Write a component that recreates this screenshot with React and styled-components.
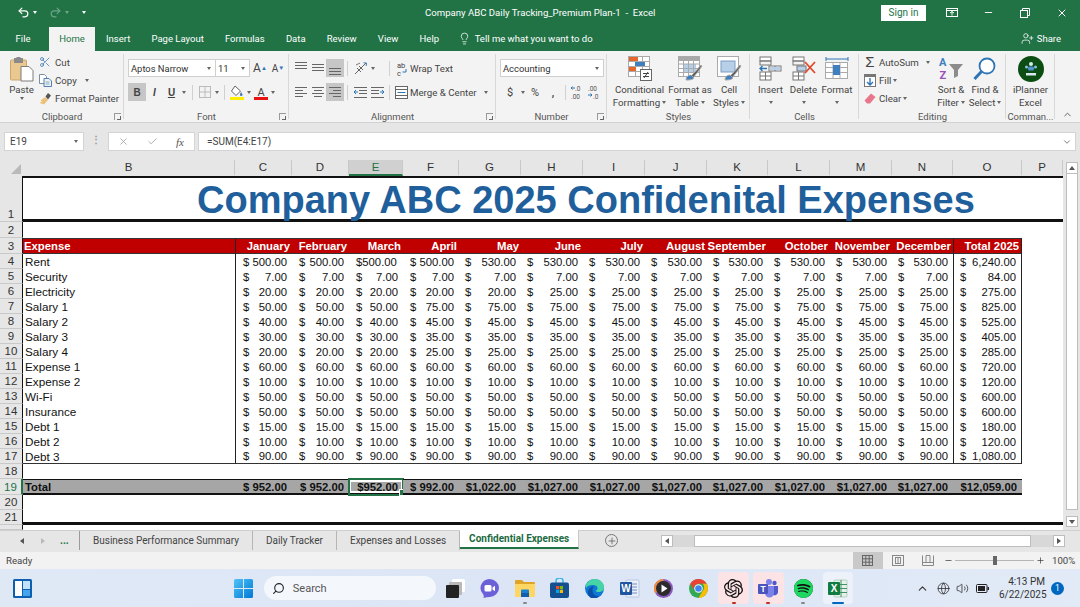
import React from "react";
import styled, { createGlobalStyle } from "styled-components";
import { Undo2, Redo2, Lightbulb, UserPlus, Scissors, Search, ChevronUp, ChevronDown, Globe, Volume2, X, Check, Minus, Plus } from "lucide-react";
import { SiOpenai, SiSpotify } from "react-icons/si";

const UI_FONT = `Roboto, "Noto Sans", sans-serif`;
const CELL_FONT = `"Liberation Sans", Arial, sans-serif`;
const GREEN = "#217346";

const GlobalStyle = createGlobalStyle`
  html, body { margin: 0; padding: 0; width: 1080px; height: 607px; overflow: hidden; }
  body { font-family: ${UI_FONT}; background: #e6e6e6; }
  * { box-sizing: border-box; }
`;

// column widths B..P
const COLUMNS = [
  ["B", 212], ["C", 57], ["D", 57], ["E", 54], ["F", 56], ["G", 62], ["H", 62], ["I", 62],
  ["J", 62], ["K", 61], ["L", 62], ["M", 62], ["N", 61], ["O", 69], ["P", 41],
];
const TEMPLATE = `23px ${COLUMNS.map((c) => c[1] + "px").join(" ")} 3px`;

const MONTHS = ["January", "February", "March", "April", "May", "June", "July", "August", "September", "October", "November", "December"];

const rep = (a, b, c) => [...Array(a).fill(b), ...Array(12 - a).fill(c)];
const EXPENSES = [
  ["Rent", rep(4, 500, 530), "6,240.00"],
  ["Security", rep(12, 7), "84.00"],
  ["Electricity", rep(5, 20, 25), "275.00"],
  ["Salary 1", rep(3, 50, 75), "825.00"],
  ["Salary 2", rep(3, 40, 45), "525.00"],
  ["Salary 3", rep(3, 30, 35), "405.00"],
  ["Salary 4", rep(3, 20, 25), "285.00"],
  ["Expense 1", rep(12, 60), "720.00"],
  ["Expense 2", rep(12, 10), "120.00"],
  ["Wi-Fi", rep(12, 50), "600.00"],
  ["Insurance", rep(12, 50), "600.00"],
  ["Debt 1", rep(12, 15), "180.00"],
  ["Debt 2", rep(12, 10), "120.00"],
  ["Debt 3", rep(12, 90), "1,080.00"],
];
const TOTALS = ["$ 952.00", "$ 952.00", "$952.00", "$ 992.00", "$1,022.00", "$1,027.00", "$1,027.00", "$1,027.00", "$1,027.00", "$1,027.00", "$1,027.00", "$1,027.00"];

/* ---------- shell ---------- */
const Page = styled.div`
  width: 1080px;
  height: 607px;
  display: flex;
  flex-direction: column;
  overflow: hidden;
`;

const TitleBar = styled.div`
  height: 25px;
  background: ${GREEN};
  color: #fff;
  display: flex;
  align-items: center;
  font-size: 9.6px;
`;
const QuickAccess = styled.div`
  width: 425px;
  padding-left: 17px;
  display: flex;
  align-items: center;
  gap: 3px;
`;
const DocTitle = styled.div`
  width: 456px;
  white-space: pre;
`;
const SignIn = styled.div`
  width: 45px;
  height: 16px;
  background: #fff;
  color: ${GREEN};
  font-size: 10px;
  display: flex;
  align-items: center;
  justify-content: center;
`;
const WinBtn = styled.div`
  width: 36.5px;
  display: flex;
  justify-content: center;
`;

const TabBar = styled.div`
  height: 26px;
  background: ${GREEN};
  display: flex;
  align-items: flex-end;
  padding-left: 5px;
  font-size: 9.5px;
  color: #fff;
`;
const RibbonTab = styled.div`
  height: 24px;
  padding: 0 10.6px 2px;
  margin-right: ${(p) => (p.$first ? "7.5px" : "0")};
  display: flex;
  align-items: center;
  background: ${(p) => (p.$active ? "#f3f3f3" : "transparent")};
  color: ${(p) => (p.$active ? GREEN : "#fff")};
`;
const TellMe = styled.div`
  height: 24px;
  padding-bottom: 2px;
  margin-left: 8px;
  display: flex;
  align-items: center;
  gap: 4px;
`;
const Share = styled.div`
  height: 24px;
  padding-bottom: 2px;
  margin-left: auto;
  margin-right: 19px;
  display: flex;
  align-items: center;
  gap: 3px;
`;

/* ---------- ribbon ---------- */
const Ribbon = styled.div`
  height: 72px;
  background: #f3f3f3;
  border-bottom: 1px solid #d2d2d2;
  display: flex;
  font-size: 9.7px;
  color: #444;
`;
const Group = styled.div`
  width: ${(p) => p.$w}px;
  flex: none;
  display: flex;
  flex-direction: column;
  position: relative;
  &::after {
    content: "";
    position: absolute;
    right: 0;
    top: 3px;
    bottom: 3px;
    width: 1px;
    background: #d8d8d8;
  }
`;
const GroupBody = styled.div`
  height: 59px;
  display: flex;
  padding-left: ${(p) => p.$pl || 0}px;
  flex-direction: ${(p) => (p.$rows ? "column" : "row")};
  gap: ${(p) => (p.$rows ? "6px" : "0")};
  padding-top: ${(p) => (p.$rows ? "8px" : "0")};
`;
const GroupLabel = styled.div`
  height: 12px;
  text-align: center;
  line-height: 14px;
  white-space: nowrap;
  color: #555;
  font-size: 9.5px;
  position: relative;
`;
const Launcher = styled.span`
  position: absolute;
  right: 3px;
  top: 3px;
  width: 7px;
  height: 7px;
  border: 1px solid #999;
  border-width: 1px 0 0 1px;
  &::after {
    content: "";
    position: absolute;
    right: 0;
    bottom: 0;
    width: 3px;
    height: 3px;
    border: solid #666;
    border-width: 0 1px 1px 0;
  }
`;
const Caret = styled.span`
  display: inline-block;
  width: 0;
  height: 0;
  flex: none;
  border-left: 2.5px solid transparent;
  border-right: 2.5px solid transparent;
  border-top: 3px solid ${(p) => p.$color || "#666"};
  margin-left: ${(p) => p.$ml || 0}px;
`;
const Spacer = styled.span`
  width: ${(p) => p.$w}px;
  flex: none;
`;
const PasteBtn = styled.div`
  width: 27px;
  flex: none;
  display: flex;
  flex-direction: column;
  align-items: center;
  padding-top: 6px;
  line-height: 13px;
  gap: 1px;
`;
const Stack = styled.div`
  display: flex;
  flex-direction: column;
  padding-top: 2px;
  padding-left: ${(p) => p.$pl || 0}px;
  width: ${(p) => (p.$w ? p.$w + "px" : "auto")};
  flex: none;
`;
const SmallRow = styled.div`
  height: 18px;
  display: flex;
  align-items: center;
  white-space: nowrap;
`;
const SmallIcon = styled.span`
  width: ${(p) => p.$w || 14}px;
  display: flex;
  justify-content: center;
  margin-right: ${(p) => p.$mr ?? 3}px;
  flex: none;
`;
const ToolRow = styled.div`
  height: 18px;
  display: flex;
  align-items: center;
`;
const Select = styled.div`
  width: ${(p) => p.$w}px;
  height: 18px;
  background: #fff;
  border: 1px solid #cfcfcf;
  margin-left: -1px;
  display: flex;
  align-items: center;
  justify-content: space-between;
  padding: 0 4px 0 2px;
  color: #333;
  font-size: 9.4px;
  white-space: nowrap;
  &:first-child { margin-left: 0; }
`;
const Tool = styled.div`
  width: ${(p) => p.$w}px;
  height: 18px;
  flex: none;
  display: flex;
  align-items: center;
  justify-content: center;
  background: ${(p) => (p.$on ? "#c6c6c6" : "transparent")};
  color: #444;
  font-weight: ${(p) => (p.$b ? 700 : 400)};
  font-style: ${(p) => (p.$i ? "italic" : "normal")};
  text-decoration: ${(p) => (p.$u ? "underline" : "none")};
  font-family: ${(p) => (p.$cell ? CELL_FONT : UI_FONT)};
  font-size: ${(p) => p.$fs || 10}px;
`;
const Grow = styled.sup`
  font-size: 6px;
  color: #2f74b5;
  line-height: 0;
`;
const RowSep = styled.span`
  width: 1px;
  height: 15px;
  flex: none;
  background: #d0d0d0;
  margin: 0 ${(p) => p.$r ?? 3}px 0 ${(p) => p.$l ?? 3}px;
`;
const ToolText = styled.span`
  white-space: nowrap;
`;
const BigRow = styled.div`
  display: flex;
  padding-left: ${(p) => p.$pl || 0}px;
`;
const BigBtn = styled.div`
  width: ${(p) => p.$w}px;
  flex: none;
  display: flex;
  flex-direction: column;
  align-items: center;
  padding-top: 5px;
  line-height: 13px;
  white-space: nowrap;
  text-align: center;
`;
const BigIcon = styled.div`
  height: 25px;
  margin-bottom: 2px;
  display: flex;
  justify-content: center;
`;
const BigLine = styled.div`
  height: 13px;
  display: flex;
  align-items: center;
  justify-content: center;
  gap: 2px;
`;
const CollapseBtn = styled.div`
  flex: 1;
  display: flex;
  align-items: flex-end;
  justify-content: center;
  padding-bottom: 2px;
  color: #555;
`;
const Sigma = styled.span`
  font-family: ${CELL_FONT};
  font-size: 15px;
  line-height: 14px;
  color: #444;
`;

/* ---------- formula bar ---------- */
const FormulaArea = styled.div`
  height: 37px;
  padding: 9px 4px 0;
  background: #e6e6e6;
  display: flex;
  font-size: 10px;
  color: #444;
`;
const NameBox = styled.div`
  width: 80px;
  height: 19px;
  background: #fff;
  border: 1px solid #d4d4d4;
  display: flex;
  align-items: center;
  justify-content: space-between;
  padding: 0 5px 0 5px;
`;
const Dots = styled.div`
  width: 24px;
  text-align: center;
  line-height: 16px;
  color: #999;
  font-weight: 700;
`;
const FxBox = styled.div`
  width: 87px;
  height: 19px;
  background: #fff;
  border: 1px solid #d4d4d4;
  display: flex;
  align-items: center;
  justify-content: space-between;
  padding: 0 10px 0 8.5px;
  color: #aaa;
`;
const Fx = styled.i`
  font-family: "Liberation Serif", serif;
  font-size: 11px;
  color: #555;
`;
const FormulaInput = styled.div`
  width: 878px;
  height: 19px;
  margin-left: 3px;
  background: #fff;
  border: 1px solid #d4d4d4;
  display: flex;
  align-items: center;
  justify-content: space-between;
  padding: 0 3px 0 8px;
`;

/* ---------- sheet ---------- */
const SheetArea = styled.div`
  height: 370px;
  display: flex;
  background: #e6e6e6;
  overflow: hidden;
`;
const GridWrap = styled.div`
  width: 1066px;
  flex: none;
  font-family: ${CELL_FONT};
  font-size: 11.3px;
  color: #111;
`;
const Row = styled.div`
  display: grid;
  grid-template-columns: ${TEMPLATE};
  height: ${(p) => p.$h || 15}px;
`;
const Corner = styled.div`
  position: relative;
  &::after {
    content: "";
    position: absolute;
    left: 11px;
    top: 4px;
    width: 10px;
    height: 10px;
    background: #b9b9b9;
    clip-path: polygon(100% 0, 100% 100%, 0 100%);
  }
`;
const ColHead = styled.div`
  display: flex;
  align-items: center;
  justify-content: center;
  font-size: 11.5px;
  color: ${(p) => (p.$sel ? GREEN : "#333")};
  background: ${(p) => (p.$sel ? "#d0d0d0" : "#e6e6e6")};
  border-right: 1px solid #c8c8c8;
  border-bottom: 2px solid ${(p) => (p.$sel ? GREEN : "transparent")};
`;
const RowNum = styled.div`
  display: flex;
  align-items: flex-end;
  justify-content: center;
  font-size: 11.5px;
  line-height: 14px;
  background: #e6e6e6;
  color: ${(p) => (p.$sel ? GREEN : "#333")};
  border-right: ${(p) => (p.$sel ? `2px solid ${GREEN}` : "1px solid #111")};
  border-bottom: 1px solid #c9c9c9;
`;
const TitleCell = styled.div`
  grid-column: 2 / span 15;
  background: #fff;
  border-top: 2px solid #111;
  border-bottom: 3px solid #111;
  padding: 3px 0 0 174px;
  font-size: 38px;
  font-weight: 700;
  line-height: 38px;
  color: #1f5f9c;
  white-space: nowrap;
`;
const Blank = styled.div`
  background: #fff;
  grid-column: ${(p) => p.$col || "auto"};
  border-bottom: ${(p) => (p.$thick ? "3px solid #111" : "none")};
`;
const HeadCell = styled.div`
  background: #c00000;
  color: #fff;
  font-weight: 700;
  border-top: 1px solid #333;
  border-bottom: 1px solid #333;
  border-left: ${(p) => (p.$edge ? "1px solid #222" : "none")};
  border-right: ${(p) => (p.$end ? "1px solid #222" : "none")};
  display: flex;
  align-items: center;
  justify-content: ${(p) => (p.$left ? "flex-start" : "flex-end")};
  padding: ${(p) => (p.$left ? "0 0 0 1px" : "0 2px 0 0")};
  white-space: nowrap;
`;
const TextCell = styled.div`
  background: #fff;
  padding-left: 2px;
  font-size: 11.7px;
  display: flex;
  align-items: center;
  border-bottom: ${(p) => (p.$last ? "1px solid #333" : "none")};
`;
const MoneyCell = styled.div`
  background: #fff;
  display: flex;
  align-items: center;
  justify-content: space-between;
  padding: 0 5px 0 ${(p) => (p.$tight ? 7 : 6)}px;
  white-space: nowrap;
  border-left: ${(p) => (p.$edge ? "1px solid #222" : "none")};
  border-right: ${(p) => (p.$end ? "1px solid #222" : "none")};
  border-bottom: ${(p) => (p.$last ? "1px solid #333" : "none")};
`;
const TotalCell = styled.div`
  background: #a6a6a6;
  font-weight: 700;
  display: flex;
  align-items: center;
  justify-content: ${(p) => (p.$left ? "flex-start" : "flex-end")};
  padding: ${(p) => (p.$left ? "0 0 0 2px" : "0 5px 0 0")};
  border-top: 1px solid #111;
  border-bottom: 2px solid #111;
  white-space: nowrap;
  position: relative;
  ${(p) =>
    p.$sel &&
    `
    outline: 2px solid ${GREEN};
    outline-offset: -1px;
    box-shadow: inset 0 0 0 2px #fff;
    &::after {
      content: "";
      position: absolute;
      right: -3px;
      bottom: -3px;
      width: 5px;
      height: 5px;
      background: ${GREEN};
      border: 1px solid #fff;
      box-sizing: content-box;
    }
  `}
`;
const VScroll = styled.div`
  width: 14px;
  flex: none;
  display: flex;
  flex-direction: column;
  padding-top: 2px;
`;
const ScrollBtn = styled.div`
  height: ${(p) => p.$h || 11}px;
  width: 12px;
  background: #fff;
  border: 1px solid #bdbdbd;
  display: flex;
  align-items: center;
  justify-content: center;
  flex: none;
`;
const Arrow = styled.span`
  width: 0;
  height: 0;
  opacity: ${(p) => p.$fade || 1};
  border-left: ${(p) => (p.$dir === "right" ? "4px solid #555" : p.$dir === "left" ? "none" : "3px solid transparent")};
  border-right: ${(p) => (p.$dir === "left" ? "4px solid #555" : p.$dir === "right" ? "none" : "3px solid transparent")};
  border-top: ${(p) => (p.$dir === "down" ? "4px solid #555" : p.$dir === "up" ? "none" : "3px solid transparent")};
  border-bottom: ${(p) => (p.$dir === "up" ? "4px solid #555" : p.$dir === "down" ? "none" : "3px solid transparent")};
`;
const VThumb = styled.div`
  width: 12px;
  height: 336px;
  background: #fff;
  border: 1px solid #bdbdbd;
  border-top: none;
  margin-bottom: 6px;
`;

/* ---------- sheet tabs + status ---------- */
const TabStrip = styled.div`
  height: 22px;
  background: #e6e6e6;
  display: flex;
  align-items: flex-start;
  font-size: 10px;
  color: #444;
  border-top: 1px solid #cfcfcf;
`;
const TabNav = styled.div`
  width: 80px;
  height: 19px;
  flex: none;
  display: flex;
  align-items: center;
  padding-left: 20px;
  gap: 17px;
  color: ${GREEN};
  border-right: 1px solid #9a9a9a;
`;
const NavMore = styled.span`
  font-weight: 700;
  margin-left: -2px;
`;
const SheetTab = styled.div`
  height: 19px;
  padding: 0 ${(p) => (p.$active ? "9px" : "13px")};
  margin-top: ${(p) => (p.$active ? "-1px" : "0")};
  display: flex;
  align-items: center;
  white-space: nowrap;
  background: ${(p) => (p.$active ? "#fff" : "transparent")};
  color: ${(p) => (p.$active ? "#1b6b42" : "#444")};
  font-weight: ${(p) => (p.$active ? 700 : 400)};
  border-right: 1px solid ${(p) => (p.$active ? "#c8c8c8" : "#b5b5b5")};
  border-bottom: ${(p) => (p.$active ? `2px solid ${GREEN}` : "none")};
`;
const AddSheet = styled.div`
  width: 13px;
  height: 13px;
  margin: 3px 0 0 26px;
  border: 1px solid #777;
  border-radius: 50%;
  display: flex;
  align-items: center;
  justify-content: center;
  color: #666;
`;
const HScroll = styled.div`
  margin-left: auto;
  margin-right: 15px;
  margin-top: 4px;
  width: 404px;
  height: 12px;
  background: #d8d8d8;
  display: flex;
`;
const HBtn = styled.div`
  width: 12px;
  height: 12px;
  background: #fff;
  border: 1px solid #bdbdbd;
  display: flex;
  align-items: center;
  justify-content: center;
  flex: none;
`;
const HThumb = styled.div`
  width: 338px;
  height: 12px;
  margin: 0 22px 0 21px;
  background: #fff;
  border: 1px solid #bdbdbd;
`;
const StatusBar = styled.div`
  height: 17px;
  background: #f2f2f2;
  display: flex;
  align-items: center;
  font-size: 9.6px;
  color: #444;
  padding-left: 6px;
`;
const StatusRight = styled.div`
  margin-left: auto;
  display: flex;
  align-items: center;
  height: 100%;
`;
const ViewBtn = styled.div`
  width: ${(p) => p.$w}px;
  height: 100%;
  background: ${(p) => (p.$on ? "#c9c9c9" : "transparent")};
  display: flex;
  align-items: center;
  justify-content: center;
`;
const ZoomTrack = styled.div`
  width: 79px;
  height: 1px;
  background: #b5b5b5;
  margin: 0 2px;
  position: relative;
`;
const ZoomThumb = styled.span`
  position: absolute;
  left: 38px;
  top: -4px;
  width: 4px;
  height: 9px;
  background: #666;
`;
const ZoomBtn = styled.span`
  display: flex;
  margin-left: ${(p) => p.$ml || 0}px;
`;
const ZoomPct = styled.span`
  width: 27px;
  margin: 0 1px 0 7px;
`;

/* ---------- taskbar ---------- */
const Taskbar = styled.div`
  height: 38px;
  background: linear-gradient(90deg, #dfe9f6, #dbe5f5 50%, #e2eaf7);
  display: flex;
  align-items: center;
`;
const TaskLeft = styled.div`
  width: 228px;
  flex: none;
  padding-left: 13px;
  display: flex;
`;
const Tile = styled.div`
  width: 30.8px;
  height: 32px;
  flex: none;
  border-radius: 4px;
  background: ${(p) => p.$bg || "transparent"};
  display: flex;
  align-items: center;
  justify-content: center;
  position: relative;
  margin-right: ${(p) => p.$mr ?? 4}px;
`;
const Indicator = styled.span`
  position: absolute;
  bottom: 0;
  left: 50%;
  transform: translateX(-50%);
  height: 2px;
  width: ${(p) => p.$w || 4}px;
  border-radius: 1px;
  background: ${(p) => p.$color};
`;
const SearchPill = styled.div`
  width: 172px;
  height: 24px;
  flex: none;
  margin: 0 4px 0 5px;
  background: #f4f7fc;
  border-radius: 12px;
  display: flex;
  align-items: center;
  padding-left: 8px;
  gap: 8px;
  font-size: 11px;
  color: #555;
`;
const SearchGlyph = styled(Search)`
  transform: scaleX(-1);
`;
const SpotifyDisc = styled.span`
  background: #111;
  border-radius: 50%;
  display: flex;
`;
const Tray = styled.div`
  margin-left: auto;
  display: flex;
  align-items: center;
  color: #333;
`;
const TrayItem = styled.span`
  width: ${(p) => p.$w || 19.5}px;
  display: flex;
  justify-content: center;
`;
const Clock = styled.div`
  width: 46px;
  margin-left: 7px;
  text-align: right;
  font-size: 10px;
  line-height: 13px;
  color: #333;
`;
const Badge = styled.div`
  width: 13px;
  height: 13px;
  margin: 0 16px 0 6px;
  border-radius: 50%;
  background: #0067c0;
  color: #fff;
  font-size: 8.5px;
  display: flex;
  align-items: center;
  justify-content: center;
`;

/* ---------- drawn icons ---------- */
const Lines = ({ rows, w = 12 }) => (
  <svg width={w} height="14" viewBox={`0 0 ${w} 14`}>
    {rows.map(([x1, x2, y], i) => (
      <line key={i} x1={x1} x2={x2} y1={y} y2={y} stroke="#666" strokeWidth="1" />
    ))}
  </svg>
);
const PasteIcon = () => (
  <svg width="24" height="25" viewBox="0 0 24 25">
    <rect x="0.5" y="3" width="16" height="20" rx="1" fill="#eac88f" stroke="#c9a86c" />
    <rect x="4" y="1" width="9" height="5" fill="#8a8a8a" />
    <rect x="6.5" y="0" width="4" height="2" fill="#8a8a8a" />
    <path d="M11 9.5h8l4 4v10.5H11z" fill="#fff" stroke="#7c7c7c" />
  </svg>
);
const CopyIcon = () => (
  <svg width="13" height="13" viewBox="0 0 13 13">
    <path d="M.5.5h5l2 2v7h-7z" fill="#fff" stroke="#7d8da3" />
    <path d="M5 4.5h5l2.5 2.5v5.5H5z" fill="#eef3f9" stroke="#4f7fb5" />
    <path d="M6.5 8h4M6.5 10h4" stroke="#8aa" />
  </svg>
);
const PainterIcon = () => (
  <svg width="13" height="13" viewBox="0 0 13 13">
    <path d="M6 5 9 8 5 12.5 0.5 11 3 9.5 1.5 8.5z" fill="#ecc27b" />
    <path d="M6.5 4.5 9 1l3 2.5-3 4z" fill="#555" />
  </svg>
);
const BordersIcon = () => (
  <svg width="12" height="12" viewBox="0 0 12 12" stroke="#bbb" fill="none">
    <rect x=".5" y=".5" width="11" height="11" />
    <path d="M6 .5v11M.5 6h11" />
  </svg>
);
const FillIcon = () => (
  <svg width="14" height="15" viewBox="0 0 14 15">
    <path d="M5 1 10.5 6 6 10.5 1.5 6z" fill="#fff" stroke="#666" />
    <path d="M11 7c1 1.5 1.5 2 1.5 2.8a1.3 1.3 0 0 1-2.6 0C9.900 9 10.500 8.200 11 7z" fill="#4a78b5" />
    <rect x="0" y="12" width="14" height="3" fill="#ffee00" />
  </svg>
);
const ColorIcon = () => (
  <svg width="14" height="15" viewBox="0 0 14 15" overflow="visible">
    <text x="7" y="10.500" textAnchor="middle" fontSize="11" fontFamily="Roboto, sans-serif" fill="#444">A</text>
    <rect x="0" y="12" width="14" height="3" fill="#e81313" />
  </svg>
);
const OrientIcon = () => (
  <svg width="13" height="13" viewBox="0 0 13 13" fill="none" stroke="#666">
    <path d="M1 12 12 1M3 6l4 4M5 4l4 4" />
    <path d="M9.500 .8 12.500 1 12.200 4" stroke="#4a78b5" />
    <path d="M2 3 6 1" stroke="#777" />
  </svg>
);
const WrapIcon = () => (
  <svg width="11" height="15" viewBox="0 0 11 15" overflow="visible">
    <text x="0" y="6.500" fontSize="7.500" fontFamily="Roboto, sans-serif" fill="#444">ab</text>
    <text x="0" y="15" fontSize="7.500" fontFamily="Roboto, sans-serif" fill="#444">c</text>
    <path d="M9 8v3H5.500" fill="none" stroke="#2f74b5" />
  </svg>
);
const MergeIcon = () => (
  <svg width="13" height="13" viewBox="0 0 13 13" fill="#fff" stroke="#666">
    <rect x=".5" y=".5" width="12" height="12" />
    <path d="M.5 3.500h12M.5 9.500h12" />
    <path d="M2.500 6.500h8" stroke="#2f74b5" />
  </svg>
);
const IndentIcon = ({ flip }) => (
  <svg width="13" height="11" viewBox="0 0 13 11" fill="none" stroke="#666" transform={flip ? "scale(-1 1)" : undefined}>
    <path d="M0 .5h13M5 3.500h8M5 6.500h8M0 10.500h13" />
    <path d="M4 5H0M2 3 0 5l2 2" stroke="#2f74b5" />
  </svg>
);
const DecimalIcon = ({ more }) => (
  <svg width="13" height="15" viewBox="0 0 13 15" overflow="visible" fontFamily="Roboto, sans-serif" fontSize="6.500" fill="#555">
    <text x={more ? 4 : 0} y="6">{more ? ".0" : ".00"}</text>
    <text x={more ? 0 : 5} y="14">{more ? ".00" : ".0"}</text>
    <path d={more ? "M4 3H0M1.500 1.500 0 3l1.500 1.500" : "M4 10H0M2.500 8.500 4 10l-1.500 1.500"} fill="none" stroke="#2f74b5" />
  </svg>
);
const CondFormatIcon = () => (
  <svg width="24" height="25" viewBox="0 0 24 25" fill="none" stroke="#aaa">
    <rect x=".5" y=".5" width="21" height="20" fill="#fff" />
    <path d="M7.500 .5v20M14.500 .5v20M.5 5.500h21M.5 10.500h21M.5 15.500h21" />
    <rect x="1" y="1" width="9" height="4" fill="#e7662a" stroke="none" />
    <rect x="7" y="6" width="10" height="4" fill="#3f7fc0" stroke="none" />
    <rect x="1" y="11" width="7" height="4" fill="#e7662a" stroke="none" />
    <rect x="12.500" y="13.500" width="11" height="11" fill="#fff" stroke="#666" />
    <path d="M15 17.500h6M15 20.500h6M20 16l-4 6" stroke="#444" />
  </svg>
);
const BrushOver = () => (
  <g>
    <path d="M13 20c3-3 5-5 10-11l1 1c-4 6-6 8-9 12z" fill="#606060" />
    <path d="M8 24c0-3 2-5 5-5l3 3c-2 2-5 2-8 2z" fill="#3f7fc0" />
  </g>
);
const TableIcon = () => (
  <svg width="25" height="25" viewBox="0 0 25 25" fill="none" stroke="#aaa">
    <rect x=".5" y=".5" width="21" height="20" fill="#fff" />
    <rect x=".5" y=".5" width="21" height="4" fill="#a8a8a8" />
    <rect x="5" y="8" width="13" height="9" fill="#b8cfe8" stroke="none" />
    <path d="M5.500 .5v20M10.500 .5v20M15.500 .5v20M.5 8h21M.5 12.500h21M.5 16.500h21" />
    <BrushOver />
  </svg>
);
const CellStyleIcon = () => (
  <svg width="25" height="25" viewBox="0 0 25 25" fill="none" stroke="#aaa">
    <rect x=".5" y=".5" width="21" height="20" fill="#fff" />
    <rect x="4" y="5" width="14" height="11" fill="#b8cfe8" stroke="#7e9cc0" />
    <BrushOver />
  </svg>
);
const InsertIcon = () => (
  <svg width="23" height="25" viewBox="0 0 23 25" fill="#fff" stroke="#777">
    <rect x="1" y="1" width="11" height="4" />
    <rect x="1" y="5" width="11" height="4" fill="none" />
    <rect x="1" y="16" width="11" height="8" />
    <path d="M6.500 16v8M1 20h11" />
    <rect x="10" y="10" width="12" height="5" />
    <path d="M16 10v5" />
    <path d="M8 12.500H1M3.500 10 1 12.500 3.500 15" fill="none" stroke="#2f74b5" strokeWidth="1.400" />
    <rect x="11" y="11" width="10" height="3" fill="#b8cfe8" stroke="none" />
  </svg>
);
const DeleteIcon = () => (
  <svg width="24" height="25" viewBox="0 0 24 25" fill="#fff" stroke="#777">
    <rect x="1" y="1" width="11" height="4" />
    <rect x="1" y="5" width="11" height="4" fill="none" />
    <rect x="1" y="16" width="11" height="8" />
    <path d="M6.500 16v8M1 20h11" />
    <rect x="5" y="10" width="9" height="5" fill="#b8cfe8" />
    <path d="M13 6l10 11M23 6 13 17" stroke="#e0492b" strokeWidth="1.800" fill="none" />
  </svg>
);
const FormatIcon = () => (
  <svg width="24" height="25" viewBox="0 0 24 25" fill="none" stroke="#aaa">
    <path d="M1 1v4M23 1v4M1 3h22" stroke="#2f74b5" />
    <rect x=".5" y="6.500" width="22" height="16" fill="#fff" />
    <path d="M8 6.500v16M15 6.500v16M.5 11.500h22M.5 16.500h22" />
    <rect x="8" y="9" width="7" height="10" fill="#3f7fc0" stroke="none" />
  </svg>
);
const FillDownIcon = () => (
  <svg width="12" height="13" viewBox="0 0 12 13">
    <rect x=".5" y=".5" width="11" height="12" fill="#fff" stroke="#777" />
    <rect x="1" y="1" width="10" height="2" fill="#777" />
    <path d="M6 4v7M3 8l3 3 3-3" fill="none" stroke="#2f74b5" strokeWidth="1.400" />
  </svg>
);
const EraserIcon = () => (
  <svg width="12" height="11" viewBox="0 0 12 11">
    <path d="M7 .5 11.500 4 6 10.500H3L.5 7.500z" fill="#e9758a" />
  </svg>
);
const SortIcon = () => (
  <svg width="25" height="25" viewBox="0 0 25 25" overflow="visible">
    <text x="0" y="10" fontSize="11" fontWeight="700" fontFamily="Roboto, sans-serif" fill="#3f7fc0">A</text>
    <text x="0.500" y="23" fontSize="11" fontWeight="700" fontFamily="Roboto, sans-serif" fill="#9a4fbb">Z</text>
    <path d="M10 8h14l-5 6v6l-4 2v-8z" fill="#8c8c8c" />
  </svg>
);
const FindIcon = () => (
  <svg width="24" height="25" viewBox="0 0 24 25" fill="none">
    <circle cx="14" cy="10" r="7.500" stroke="#2f74b5" strokeWidth="1.800" fill="#fff" />
    <path d="M8.500 15.500 1.500 23" stroke="#2f74b5" strokeWidth="3" />
  </svg>
);
const PlannerIcon = () => (
  <svg width="26" height="26" viewBox="0 0 26 26">
    <circle cx="13" cy="13" r="13" fill="#0b4d12" />
    <circle cx="13" cy="8" r="2" fill="#d8e8ee" />
    <circle cx="8.500" cy="11" r="1.500" fill="#8fc1dc" />
    <circle cx="17.500" cy="11" r="1.500" fill="#8fc1dc" />
    <rect x="10" y="10.500" width="6" height="4" rx="1.500" fill="#4f94d0" />
    <path d="M8 17h10v2.500H8z" fill="#d8e8ee" />
  </svg>
);
const DisplayIcon = () => (
  <svg width="12" height="10" viewBox="0 0 12 10" fill="none" stroke="#fff">
    <rect x=".5" y=".5" width="11" height="8" />
    <path d="M.5 2.500h11M6 7.500v-4M4 5l2-1.500L8 5" />
  </svg>
);
const RestoreIcon = () => (
  <svg width="10" height="10" viewBox="0 0 10 10" fill="none" stroke="#fff">
    <rect x=".5" y="2.500" width="7" height="7" />
    <path d="M2.500 2.500v-2h7v7h-2" />
  </svg>
);
const WindowsLogo = () => (
  <svg width="19" height="19" viewBox="0 0 19 19">
    <defs>
      <linearGradient id="winL" x1="0" y1="0" x2="1" y2="1">
        <stop offset="0" stopColor="#4fc3f7" />
        <stop offset="1" stopColor="#0078d4" />
      </linearGradient>
    </defs>
    <path d="M0 1.500A1.500 1.500 0 0 1 1.500 0H9v9H0zM10 0h7.500A1.500 1.500 0 0 1 19 1.500V9h-9zM0 10h9v9H1.500A1.500 1.500 0 0 1 0 17.500zM10 10h9v7.500a1.500 1.500 0 0 1-1.500 1.500H10z" fill="url(#winL)" />
  </svg>
);
const WidgetsIcon = () => (
  <svg width="19" height="19" viewBox="0 0 19 19">
    <rect width="19" height="19" rx="1.500" fill="#0f5fb0" />
    <rect x="2" y="2" width="7" height="15" fill="#fff" />
    <rect x="10" y="2" width="7" height="8" fill="#bfe3fa" />
    <rect x="10" y="11" width="7" height="6" fill="#46a4ec" />
  </svg>
);
const TaskViewIcon = () => (
  <svg width="19" height="19" viewBox="0 0 19 19">
    <rect x="6" y="0" width="13" height="13" rx="1.500" fill="#fff" />
    <rect x="3" y="3" width="13" height="13" rx="1" fill="#b9b9b9" />
    <rect x="0" y="6" width="13" height="13" rx="1" fill="#222" />
  </svg>
);
const ChatIcon = () => (
  <svg width="19" height="19" viewBox="0 0 19 19">
    <path d="M9.500 0a9.500 9 0 0 1 0 18c-2 0-4 .5-6 1 .5-1.500.3-3-.5-4A9.500 9 0 0 1 9.500 0z" fill="#6b60d8" />
    <rect x="4.500" y="6" width="7" height="6.500" rx="1.500" fill="#fff" />
    <path d="M12.500 8.500 15 6.800v5.400l-2.500-1.700z" fill="#fff" />
  </svg>
);
const FolderIcon = () => (
  <svg width="20" height="18" viewBox="0 0 20 18">
    <path d="M0 2a1 1 0 0 1 1-1h6l2 2h10a1 1 0 0 1 1 1v3H0z" fill="#e0a526" />
    <path d="M0 5h20v12a1 1 0 0 1-1 1H1a1 1 0 0 1-1-1z" fill="#fdd663" />
    <rect x="6" y="10.500" width="8" height="5" rx=".8" fill="#1a7fd0" />
    <rect x="6" y="14" width="8" height="4" fill="#0f5fb0" />
  </svg>
);
const StoreIcon = () => (
  <svg width="19" height="20" viewBox="0 0 19 20">
    <path d="M6 5V3a3.500 3 0 0 1 7 0v2" fill="none" stroke="#37b5ea" strokeWidth="1.500" />
    <rect x="0" y="4.500" width="19" height="15.500" rx="2" fill="#14508f" />
    <rect x="6" y="8" width="3.200" height="3.200" fill="#f25022" />
    <rect x="9.800" y="8" width="3.200" height="3.200" fill="#7fba00" />
    <rect x="6" y="11.800" width="3.200" height="3.200" fill="#00a4ef" />
    <rect x="9.800" y="11.800" width="3.200" height="3.200" fill="#ffb900" />
  </svg>
);
const EdgeIcon = () => (
  <svg width="19" height="19" viewBox="0 0 19 19">
    <circle cx="9.500" cy="9.500" r="9.500" fill="#0f78d4" />
    <path d="M1 6C3 1.500 7 0 10 0c5 0 9 3.500 9 8.500 0 3-2.500 4.500-5 4.500-2 0-3.500-.6-3.500-1.500 3 0 3-5-1.500-5.500C5.500 5.700 3 6 1 9z" fill="#46d3a5" />
    <path d="M6 19c-3-2-4-6-2-9 1-1.500 3-3 5-3-2 2-2 6 0 8.500 1.500 1.500 4 2 6 1.500-2 1.800-6 3.500-9 2z" fill="#0c4fa8" />
  </svg>
);
const WordIcon = () => (
  <svg width="19" height="19" viewBox="0 0 19 19" overflow="visible">
    <rect x="6" y="1" width="13" height="17" rx="1" fill="#e9eef7" stroke="#8ea9d5" strokeWidth=".5" />
    <path d="M11 5h6M11 8h6M11 11h6M11 14h6" stroke="#6f8fca" />
    <rect x="0" y="3" width="12" height="13" rx="1" fill="#21559f" />
    <text x="6" y="13" textAnchor="middle" fontSize="10" fontWeight="700" fontFamily="Liberation Sans, sans-serif" fill="#fff">W</text>
  </svg>
);
const PlayerIcon = () => (
  <svg width="19" height="19" viewBox="0 0 19 19">
    <circle cx="9.500" cy="9.500" r="9.500" fill="#8b5bc0" />
    <path d="M9.500 0A9.500 9.500 0 0 0 1 14l3-1A7 7 0 0 1 9.500 2z" fill="#f08a3c" />
    <circle cx="9.500" cy="9.500" r="7.500" fill="#2b2b2b" />
    <path d="M7.500 5.500v8l6-4z" fill="#fff" />
  </svg>
);
const ChromeIcon = () => (
  <svg width="19" height="19" viewBox="0 0 19 19">
    <circle cx="9.500" cy="9.500" r="9.500" fill="#34a853" />
    <path d="M1.300 4.750A9.500 9.500 0 0 1 17.700 4.750H9.500a4.750 4.750 0 0 0-4.100 7.100z" fill="#ea4335" />
    <path d="M17.700 4.750A9.500 9.500 0 0 1 9.500 19l4.100-7.100a4.750 4.750 0 0 0 0-7.150z" fill="#fbbc05" />
    <circle cx="9.500" cy="9.500" r="4.200" fill="#fff" />
    <circle cx="9.500" cy="9.500" r="3.300" fill="#4285f4" />
  </svg>
);
const TeamsIcon = () => (
  <svg width="20" height="18" viewBox="0 0 20 18" overflow="visible">
    <circle cx="11" cy="3" r="3" fill="#7b83eb" />
    <circle cx="16.500" cy="4" r="2.200" fill="#5059c9" />
    <path d="M13 7h7v6a3.500 3.500 0 0 1-5 3z" fill="#5059c9" />
    <path d="M6 7h10v7a4.500 4.500 0 0 1-9 0z" fill="#7b83eb" />
    <rect x="0" y="5" width="10" height="10" rx="1" fill="#4b53bc" />
    <text x="5" y="13" textAnchor="middle" fontSize="8.500" fontWeight="700" fontFamily="Liberation Sans, sans-serif" fill="#fff">T</text>
  </svg>
);
const ExcelIcon = () => (
  <svg width="19" height="19" viewBox="0 0 19 19" overflow="visible">
    <rect x="6" y="1" width="13" height="17" rx="1" fill="#e6f1ea" stroke="#7fb295" strokeWidth=".5" />
    <path d="M13 1v17M7 5.500h12M7 9.500h12M7 13.500h12" stroke="#3f9268" />
    <rect x="0" y="3" width="12" height="13" rx="1" fill="#107c41" />
    <text x="6" y="13" textAnchor="middle" fontSize="10" fontWeight="700" fontFamily="Liberation Sans, sans-serif" fill="#fff">X</text>
  </svg>
);
const BatteryIcon = () => (
  <svg width="13" height="9" viewBox="0 0 13 9">
    <rect x=".5" y=".5" width="10.500" height="8" rx="1" fill="none" stroke="#222" />
    <rect x="2" y="2" width="7" height="5" fill="#222" />
    <rect x="11.500" y="3" width="1.500" height="3" fill="#222" />
  </svg>
);
const GridViewIcon = () => (
  <svg width="11" height="11" viewBox="0 0 11 11" fill="none" stroke="#666">
    <rect x=".5" y=".5" width="10" height="10" />
    <path d="M3.800 .5v10M7.200 .5v10M.5 3.800h10M.5 7.200h10" />
  </svg>
);
const PageViewIcon = () => (
  <svg width="12" height="11" viewBox="0 0 12 11" fill="none" stroke="#888">
    <rect x=".5" y=".5" width="11" height="10" />
    <rect x="3.500" y="2.500" width="5" height="6" />
    <path d="M6 2.500v6" />
  </svg>
);
const BreakViewIcon = () => (
  <svg width="12" height="11" viewBox="0 0 12 11" fill="none" stroke="#888">
    <path d="M.5 .5v10h11V.5M.5 7.500h11M4 .5v7M8 .5v7M4 .5h4" />
  </svg>
);

/* ---------- page parts ---------- */
const Top = () => (
  <>
    <TitleBar>
      <QuickAccess>
        <Undo2 size={13} strokeWidth={2.2} />
        <Caret $color="#fff" />
        <Spacer $w={6} />
        <Redo2 size={13} color="#6fa58a" />
        <Caret $color="#6fa58a" />
        <Spacer $w={7} />
        <Caret $color="#fff" />
      </QuickAccess>
      <DocTitle>{"Company ABC Daily Tracking_Premium Plan-1  -  Excel"}</DocTitle>
      <SignIn>Sign in</SignIn>
      <Spacer $w={8} />
      <WinBtn><DisplayIcon /></WinBtn>
      <WinBtn><Minus size={11} /></WinBtn>
      <WinBtn><RestoreIcon /></WinBtn>
      <WinBtn><X size={12} /></WinBtn>
    </TitleBar>
    <TabBar>
      {["File", "Home", "Insert", "Page Layout", "Formulas", "Data", "Review", "View", "Help"].map((t) => (
        <RibbonTab key={t} $active={t === "Home"} $first={t === "File"}>{t}</RibbonTab>
      ))}
      <TellMe><Lightbulb size={13} strokeWidth={1.4} /> Tell me what you want to do</TellMe>
      <Share><UserPlus size={13} strokeWidth={1.4} /> Share</Share>
    </TabBar>
  </>
);

const RibbonPanel = () => (
  <Ribbon>
    <Group $w={124}>
      <GroupBody $pl={8}>
        <PasteBtn>
          <PasteIcon />
          <span>Paste</span>
          <Caret />
        </PasteBtn>
        <Stack $pl={3}>
          <SmallRow><SmallIcon><Scissors size={12} color="#2f6fa8" strokeWidth={1.4} /></SmallIcon>Cut</SmallRow>
          <SmallRow><SmallIcon><CopyIcon /></SmallIcon>Copy<Caret $ml={8} /></SmallRow>
          <SmallRow><SmallIcon><PainterIcon /></SmallIcon>Format Painter</SmallRow>
        </Stack>
      </GroupBody>
      <GroupLabel>Clipboard<Launcher /></GroupLabel>
    </Group>

    <Group $w={165}>
      <GroupBody $rows $pl={4}>
        <ToolRow>
          <Select $w={88}>Aptos Narrow<Caret /></Select>
          <Select $w={35}>11<Caret /></Select>
          <Tool $w={20} $fs={12}>A<Grow>▲</Grow></Tool>
          <Tool $w={16} $fs={10}>A<Grow>▼</Grow></Tool>
        </ToolRow>
        <ToolRow>
          <Tool $w={18} $on $b $cell>B</Tool>
          <Tool $w={17} $i $cell $b>I</Tool>
          <Tool $w={17} $u $cell $b>U</Tool>
          <Tool $w={8}><Caret /></Tool>
          <RowSep $l={4} $r={5} />
          <Tool $w={14}><BordersIcon /></Tool>
          <Tool $w={9}><Caret /></Tool>
          <RowSep $l={3} $r={4} />
          <Tool $w={16}><FillIcon /></Tool>
          <Tool $w={8}><Caret /></Tool>
          <Tool $w={16}><ColorIcon /></Tool>
          <Tool $w={8}><Caret /></Tool>
        </ToolRow>
      </GroupBody>
      <GroupLabel>Font<Launcher /></GroupLabel>
    </Group>

    <Group $w={207}>
      <GroupBody $rows $pl={3}>
        <ToolRow>
          <Tool $w={17}><Lines rows={[[0, 12, 1.5], [0, 12, 4.5], [0, 12, 7.5]]} /></Tool>
          <Tool $w={17}><Lines rows={[[0, 12, 3.5], [0, 12, 6.5], [0, 12, 9.5]]} /></Tool>
          <Tool $w={18} $on><Lines rows={[[0, 12, 7.5], [0, 12, 10.5], [0, 12, 13.5]]} /></Tool>
          <RowSep />
          <Tool $w={18}><OrientIcon /></Tool>
          <Tool $w={8}><Caret /></Tool>
          <RowSep $l={12} $r={7} />
          <SmallIcon $w={10}><WrapIcon /></SmallIcon>
          <ToolText>Wrap Text</ToolText>
        </ToolRow>
        <ToolRow>
          <Tool $w={17}><Lines rows={[[0, 12, 2.5], [0, 8, 5.5], [0, 12, 8.5], [0, 8, 11.5]]} /></Tool>
          <Tool $w={17}><Lines rows={[[0, 12, 2.5], [2, 10, 5.5], [0, 12, 8.5], [2, 10, 11.5]]} /></Tool>
          <Tool $w={18} $on><Lines rows={[[0, 12, 2.5], [4, 12, 5.5], [0, 12, 8.5], [4, 12, 11.5]]} /></Tool>
          <RowSep />
          <Tool $w={18}><IndentIcon /></Tool>
          <Tool $w={17}><IndentIcon flip /></Tool>
          <RowSep $l={3} $r={5} />
          <SmallIcon $w={13} $mr={2}><MergeIcon /></SmallIcon>
          <ToolText>Merge &amp; Center</ToolText>
          <Caret $ml={7} />
        </ToolRow>
      </GroupBody>
      <GroupLabel>Alignment<Launcher /></GroupLabel>
    </Group>

    <Group $w={111}>
      <GroupBody $rows $pl={4}>
        <ToolRow><Select $w={104}>Accounting<Caret /></Select></ToolRow>
        <ToolRow>
          <Tool $w={20} $fs={11}>$</Tool>
          <Tool $w={5}><Caret /></Tool>
          <Tool $w={20} $fs={11}>%</Tool>
          <Tool $w={16} $b>,</Tool>
          <RowSep $l={4} $r={3} />
          <Tool $w={17}><DecimalIcon more /></Tool>
          <Tool $w={17}><DecimalIcon /></Tool>
        </ToolRow>
      </GroupBody>
      <GroupLabel>Number<Launcher /></GroupLabel>
    </Group>

    <Group $w={143}>
      <GroupBody>
        <BigRow $pl={6}>
          <BigBtn $w={53}><BigIcon><CondFormatIcon /></BigIcon><BigLine>Conditional</BigLine><BigLine>Formatting<Caret /></BigLine></BigBtn>
          <BigBtn $w={48}><BigIcon><TableIcon /></BigIcon><BigLine>Format as</BigLine><BigLine>Table<Caret /></BigLine></BigBtn>
          <BigBtn $w={30}><BigIcon><CellStyleIcon /></BigIcon><BigLine>Cell</BigLine><BigLine>Styles<Caret /></BigLine></BigBtn>
        </BigRow>
      </GroupBody>
      <GroupLabel>Styles</GroupLabel>
    </Group>

    <Group $w={109}>
      <GroupBody>
        <BigRow $pl={4}>
          <BigBtn $w={33}><BigIcon><InsertIcon /></BigIcon><BigLine>Insert</BigLine><BigLine><Caret /></BigLine></BigBtn>
          <BigBtn $w={33}><BigIcon><DeleteIcon /></BigIcon><BigLine>Delete</BigLine><BigLine><Caret /></BigLine></BigBtn>
          <BigBtn $w={34}><BigIcon><FormatIcon /></BigIcon><BigLine>Format</BigLine><BigLine><Caret /></BigLine></BigBtn>
        </BigRow>
      </GroupBody>
      <GroupLabel>Cells</GroupLabel>
    </Group>

    <Group $w={147}>
      <GroupBody>
        <Stack $pl={5} $w={77}>
          <SmallRow><SmallIcon $w={12}><Sigma>Σ</Sigma></SmallIcon>AutoSum<Caret $ml={7} /></SmallRow>
          <SmallRow><SmallIcon $w={12}><FillDownIcon /></SmallIcon>Fill<Caret $ml={2} /></SmallRow>
          <SmallRow><SmallIcon $w={12}><EraserIcon /></SmallIcon>Clear<Caret $ml={2} /></SmallRow>
        </Stack>
        <BigBtn $w={30}><BigIcon><SortIcon /></BigIcon><BigLine>Sort &amp;</BigLine><BigLine>Filter<Caret /></BigLine></BigBtn>
        <BigBtn $w={38}><BigIcon><FindIcon /></BigIcon><BigLine>Find &amp;</BigLine><BigLine>Select<Caret /></BigLine></BigBtn>
      </GroupBody>
      <GroupLabel>Editing</GroupLabel>
    </Group>

    <Group $w={49}>
      <GroupBody>
        <BigBtn $w={49}><BigIcon><PlannerIcon /></BigIcon><BigLine>iPlanner</BigLine><BigLine>Excel</BigLine></BigBtn>
      </GroupBody>
      <GroupLabel>Comman...</GroupLabel>
    </Group>

    <CollapseBtn><ChevronUp size={11} /></CollapseBtn>
  </Ribbon>
);

const FormulaBar = () => (
  <FormulaArea>
    <NameBox>E19<Caret /></NameBox>
    <Dots>⋮</Dots>
    <FxBox>
      <X size={11} />
      <Check size={11} />
      <Fx>fx</Fx>
    </FxBox>
    <FormulaInput>=SUM(E4:E17)<ChevronDown size={10} color="#666" /></FormulaInput>
  </FormulaArea>
);

const Sheet = () => (
  <SheetArea>
    <GridWrap>
      <Row $h={16}>
        <Corner />
        {COLUMNS.map(([c]) => (
          <ColHead key={c} $sel={c === "E"}>{c}</ColHead>
        ))}
      </Row>
      <Row $h={46}>
        <RowNum>1</RowNum>
        <TitleCell>Company ABC 2025 Confidenital Expenses</TitleCell>
      </Row>
      <Row $h={16}>
        <RowNum>2</RowNum>
        <Blank $col="2 / span 15" />
      </Row>
      <Row $h={16}>
        <RowNum>3</RowNum>
        <HeadCell $left>Expense</HeadCell>
        {MONTHS.map((m, i) => (
          <HeadCell key={m} $edge={i === 0}>{m}</HeadCell>
        ))}
        <HeadCell $edge $end>Total 2025</HeadCell>
        <Blank />
      </Row>
      {EXPENSES.map(([name, vals, total], r) => {
        const last = r === EXPENSES.length - 1;
        return (
          <Row key={name}>
            <RowNum>{r + 4}</RowNum>
            <TextCell $last={last}>{name}</TextCell>
            {vals.map((v, i) => (
              <MoneyCell key={i} $edge={i === 0} $tight={i < 4} $last={last}>
                {r === 0 && i === 2 ? (
                  <span>$500.00</span>
                ) : (
                  <>
                    <span>$</span>
                    <span>{v.toFixed(2)}</span>
                  </>
                )}
              </MoneyCell>
            ))}
            <MoneyCell $edge $end $last={last}>
              <span>$</span>
              <span>{total}</span>
            </MoneyCell>
            <Blank />
          </Row>
        );
      })}
      <Row>
        <RowNum>18</RowNum>
        <Blank $col="2 / span 15" />
      </Row>
      <Row $h={16}>
        <RowNum $sel>19</RowNum>
        <TotalCell $left>Total</TotalCell>
        {TOTALS.map((t, i) => (
          <TotalCell key={i} $sel={i === 2}>{t}</TotalCell>
        ))}
        <TotalCell>$12,059.00</TotalCell>
        <Blank />
      </Row>
      <Row>
        <RowNum>20</RowNum>
        <Blank $col="2 / span 15" />
      </Row>
      <Row>
        <RowNum>21</RowNum>
        <Blank $col="2 / span 15" $thick />
      </Row>
      <Row $h={5}>
        <RowNum />
        <Blank $col="2 / span 15" />
      </Row>
    </GridWrap>
    <VScroll>
      <ScrollBtn $h={12}><Arrow $dir="up" /></ScrollBtn>
      <VThumb />
      <ScrollBtn $h={11}><Arrow $dir="down" /></ScrollBtn>
    </VScroll>
  </SheetArea>
);

const Bottom = () => (
  <>
    <TabStrip>
      <TabNav>
        <Arrow $dir="left" />
        <Arrow $dir="right" $fade={0.3} />
        <NavMore>...</NavMore>
      </TabNav>
      <SheetTab>Business Performance Summary</SheetTab>
      <SheetTab>Daily Tracker</SheetTab>
      <SheetTab>Expenses and Losses</SheetTab>
      <SheetTab $active>Confidential Expenses</SheetTab>
      <AddSheet><Plus size={10} /></AddSheet>
      <HScroll>
        <HBtn><Arrow $dir="left" /></HBtn>
        <HThumb />
        <HBtn><Arrow $dir="right" /></HBtn>
      </HScroll>
    </TabStrip>
    <StatusBar>
      Ready
      <StatusRight>
        <ViewBtn $w={30} $on><GridViewIcon /></ViewBtn>
        <ViewBtn $w={30}><PageViewIcon /></ViewBtn>
        <ViewBtn $w={30}><BreakViewIcon /></ViewBtn>
        <ZoomBtn $ml={1.5}><Minus size={9} /></ZoomBtn>
        <ZoomTrack><ZoomThumb /></ZoomTrack>
        <ZoomBtn><Plus size={9} /></ZoomBtn>
        <ZoomPct>100%</ZoomPct>
      </StatusRight>
    </StatusBar>
    <Taskbar>
      <TaskLeft><WidgetsIcon /></TaskLeft>
      <Tile $mr={0}><WindowsLogo /></Tile>
      <SearchPill><SearchGlyph size={13} color="#222" />Search</SearchPill>
      <Tile><TaskViewIcon /></Tile>
      <Tile><ChatIcon /></Tile>
      <Tile><FolderIcon /><Indicator $color="#888" /></Tile>
      <Tile><StoreIcon /></Tile>
      <Tile><EdgeIcon /></Tile>
      <Tile><WordIcon /></Tile>
      <Tile><PlayerIcon /></Tile>
      <Tile><ChromeIcon /></Tile>
      <Tile $bg="#fbe3e6"><SiOpenai size={19} color="#111" /><Indicator $color="#c42b1c" /></Tile>
      <Tile $bg="#fbe3e6"><TeamsIcon /><Indicator $color="#c42b1c" /></Tile>
      <Tile><SpotifyDisc><SiSpotify size={19} color="#1ed760" /></SpotifyDisc><Indicator $color="#888" /></Tile>
      <Tile $bg="#edf2fa"><ExcelIcon /><Indicator $color="#0067c0" $w={12} /></Tile>
      <Tray>
        <TrayItem $w={22}><ChevronUp size={13} /></TrayItem>
        <TrayItem><Globe size={13} strokeWidth={1.5} /></TrayItem>
        <TrayItem><Volume2 size={13} strokeWidth={1.5} /></TrayItem>
        <TrayItem><BatteryIcon /></TrayItem>
        <Clock>4:13 PM<br />6/22/2025</Clock>
        <Badge>1</Badge>
      </Tray>
    </Taskbar>
  </>
);

const App = () => (
  <Page>
    <GlobalStyle />
    <Top />
    <RibbonPanel />
    <FormulaBar />
    <Sheet />
    <Bottom />
  </Page>
);

export default App;
